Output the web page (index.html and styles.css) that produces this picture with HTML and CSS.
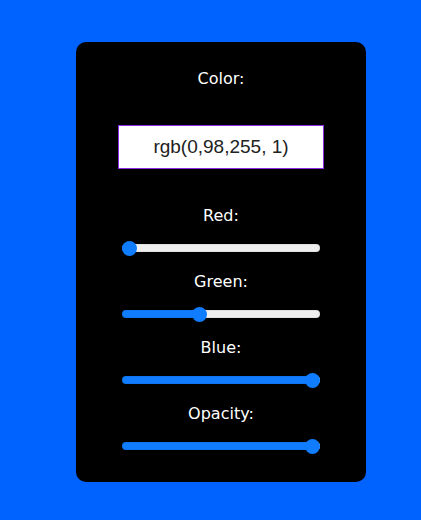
FILE: index.html
```html
<!DOCTYPE html>
<html lang="en">
<head>
<meta charset="utf-8">
<title>Color Picker</title>
<link rel="stylesheet" href="styles.css">
</head>
<body>
<main class="card">
  <label class="label label-color" for="color">Color:</label>
  <input class="color-field" id="color" type="text" value="rgb(0,98,255, 1)" readonly>

  <div class="group">
    <label class="label" for="red">Red:</label>
    <input class="slider" id="red" type="range" min="0" max="255" value="0" style="--v: 0">
  </div>
  <div class="group">
    <label class="label" for="green">Green:</label>
    <input class="slider" id="green" type="range" min="0" max="255" value="98" style="--v: 0.3843">
  </div>
  <div class="group">
    <label class="label" for="blue">Blue:</label>
    <input class="slider" id="blue" type="range" min="0" max="255" value="255" style="--v: 1">
  </div>
  <div class="group">
    <label class="label" for="opacity">Opacity:</label>
    <input class="slider" id="opacity" type="range" min="0" max="1" step="0.01" value="1" style="--v: 1">
  </div>
</main>
</body>
</html>
```

FILE: styles.css
```css
* { box-sizing: border-box; }

html, body {
  margin: 0;
  padding: 0;
}

body {
  background: #0062ff;
  width: 421px;
  height: 520px;
  overflow: hidden;
  font-family: "DejaVu Sans", Verdana, sans-serif;
}

.card {
  margin: 42px 0 0 76px;
  width: 290px;
  height: 440px;
  background: #000;
  border-radius: 10px;
  padding-top: 27px;
  display: flex;
  flex-direction: column;
  align-items: center;
}

.label {
  display: block;
  color: #fff;
  font-size: 16px;
  line-height: 19px;
  text-align: center;
}

.color-field {
  margin-top: 37px;
  width: 206px;
  height: 44px;
  border: 1px solid #8a2be2;
  background: #fff;
  color: #222;
  font-family: "Liberation Sans", Arial, sans-serif;
  font-size: 19px;
  text-align: center;
  padding: 0;
  outline: none;
}

.group {
  display: flex;
  flex-direction: column;
  align-items: center;
  margin-top: 20px;
}

.group:first-of-type {
  margin-top: 37px;
}

.slider {
  -webkit-appearance: none;
  appearance: none;
  margin: 19px 0 0;
  width: 198px;
  height: 8px;
  border-radius: 4px;
  background: linear-gradient(to right,
    #107cff calc(7.5px + var(--v) * (100% - 15px)),
    #efefef calc(7.5px + var(--v) * (100% - 15px)));
  box-shadow: inset 0 0 0 1px rgba(0, 0, 0, 0.06);
  outline: none;
}

.slider::-webkit-slider-thumb {
  -webkit-appearance: none;
  appearance: none;
  width: 15px;
  height: 15px;
  border-radius: 50%;
  background: #107cff;
  border: none;
}
```
